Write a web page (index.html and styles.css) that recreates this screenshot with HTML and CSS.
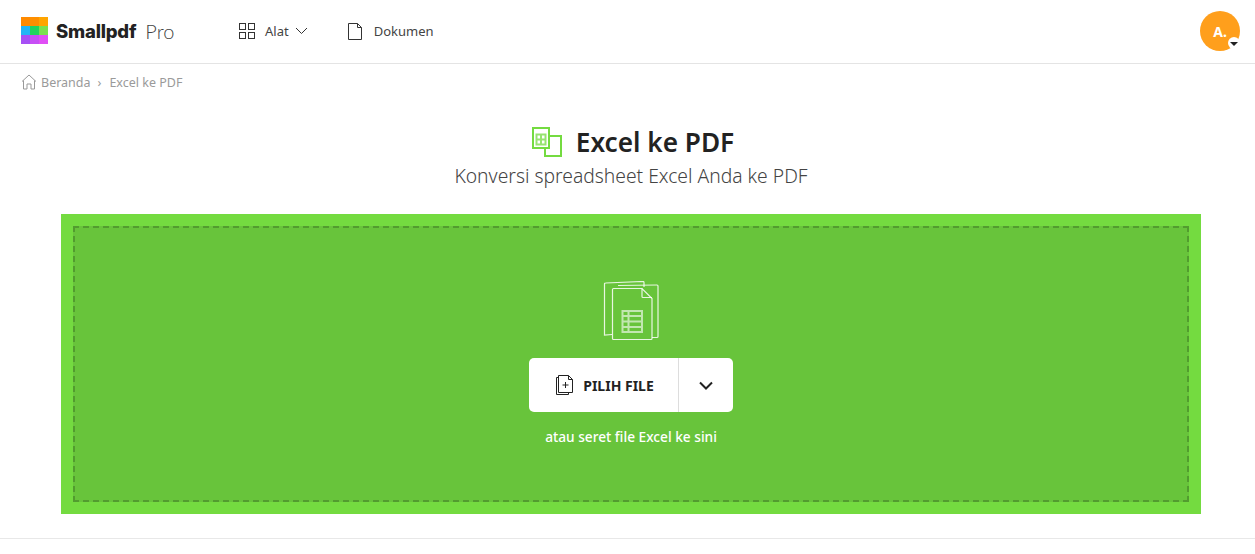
FILE: index.html
```html
<!DOCTYPE html>
<html lang="id">
<head>
    <meta charset="UTF-8">
    <meta name="viewport" content="width=device-width, initial-scale=1.0">
    <title>Excel ke PDF</title>
    <link rel="stylesheet" href="styles.css">
</head>
<body>
    <header class="topbar">
        <div class="brand">
            <svg class="brand-mark" width="27" height="27" viewBox="0 0 27 27">
                <rect x="0" y="0" width="9" height="9" fill="#ff8a00"/>
                <rect x="9" y="0" width="9" height="9" fill="#ff8f00"/>
                <rect x="18" y="0" width="9" height="9" fill="#ffa500"/>
                <rect x="0" y="9" width="9" height="9" fill="#22b4f5"/>
                <rect x="9" y="9" width="9" height="9" fill="#22d35f"/>
                <rect x="18" y="9" width="9" height="9" fill="#7be04f"/>
                <rect x="0" y="18" width="9" height="9" fill="#a64ff5"/>
                <rect x="9" y="18" width="9" height="9" fill="#c74ff5"/>
                <rect x="18" y="18" width="9" height="9" fill="#e04ff5"/>
            </svg>
            <span class="brand-name">Smallpdf</span>
            <span class="brand-tier">Pro</span>
        </div>
        <nav class="nav">
            <a class="nav-item nav-tools">
                <svg width="18" height="18" viewBox="0 0 18 18" fill="none" stroke="#333" stroke-width="1">
                    <rect x="1.5" y="1.5" width="6" height="6"/>
                    <rect x="10.5" y="1.5" width="6" height="6"/>
                    <rect x="1.5" y="10.5" width="6" height="6"/>
                    <rect x="10.5" y="10.5" width="6" height="6"/>
                </svg>
                <span>Alat</span>
                <svg class="nav-caret" width="13" height="8" viewBox="0 0 13 8" fill="none" stroke="#333" stroke-width="1">
                    <path d="M1 1l5.500 5.500L12 1"/>
                </svg>
            </a>
            <a class="nav-item nav-docs">
                <svg width="16" height="19" viewBox="0 0 16 19" fill="none" stroke="#333" stroke-width="1">
                    <path d="M1.500 1.500v16h13V5.500l-4-4z"/>
                    <path d="M10.500 1.500v4h4"/>
                </svg>
                <span>Dokumen</span>
            </a>
        </nav>
        <div class="avatar">
            A.
            <span class="avatar-caret"></span>
        </div>
    </header>

    <div class="breadcrumb">
        <svg width="16" height="16" viewBox="0 0 16 16" fill="none" stroke="#999" stroke-width="1">
            <path d="M1 7.500L8 1l7 6.500M2.500 6.500v8.500h3.500v-5h4v5h3.500V6.500"/>
        </svg>
        <span>Beranda</span>
        <span class="crumb-sep">›</span>
        <span>Excel ke PDF</span>
    </div>

    <main class="content">
        <div class="title-row">
            <svg width="31" height="31" viewBox="0 0 31 31" fill="none" stroke="#74db40" stroke-width="2">
                <rect x="13" y="9" width="16" height="20" fill="#fff"/>
                <rect x="1" y="1" width="16" height="20" fill="#fff"/>
                <path d="M4.500 7.500h9v10h-9zM4.500 12.500h9M9 7.500v10" stroke-opacity="0.75"/>
            </svg>
            <h1>Excel ke PDF</h1>
        </div>
        <p class="subtitle">Konversi spreadsheet Excel Anda ke PDF</p>

        <section class="dropzone">
            <div class="dropzone-inner">
                <svg class="files-icon" width="56" height="60" viewBox="0 0 56 60" fill="none" stroke="#fff" stroke-opacity="0.85" stroke-width="1.2">
                    <path d="M9 53.500L1.500 54V3q0-1 1-1l37.500-1.500q1 0 1 1V6"/>
                    <path d="M15 4.500l39-0.500q1 0 1 1v50.500q0 1-1 1h-5"/>
                    <path d="M9.500 8.500q0-1 1-1h28.500l10 10v40q0 1-1 1H10.500q-1 0-1-1z" fill="#68c43b"/>
                    <path d="M39 7.500v8q0 1 1 1h9"/>
                    <path d="M19.500 30h19.500v21H19.500zM19.500 35h19.500M19.500 40.500h19.500M19.500 46h19.500M25.500 30v21" stroke-opacity="0.6" stroke-width="2"/>
                </svg>
                <div class="picker">
                    <button class="picker-main">
                        <svg width="19" height="22" viewBox="0 0 19 22" fill="none" stroke="#222" stroke-width="1">
                            <path d="M3.500 3.500H1.500v17h12v-2"/>
                            <path d="M3.500 1.500v17h14V5.500l-4-4z" fill="#fff"/>
                            <path d="M13.500 1.500v4h4M10.500 8v6M7.500 11h6"/>
                        </svg>
                        PILIH FILE
                    </button>
                    <button class="picker-more">
                        <svg width="14" height="9" viewBox="0 0 14 9" fill="none" stroke="#222" stroke-width="2">
                            <path d="M1 1.500l6 6 6-6"/>
                        </svg>
                    </button>
                </div>
                <p class="drop-hint">atau seret file Excel ke sini</p>
            </div>
        </section>
    </main>

    <footer class="page-end"></footer>
</body>
</html>
```

FILE: styles.css
```css
body {
    margin: 0;
    font-family: 'Noto Sans', sans-serif;
    background: #fff;
    color: #222;
}
.topbar {
    height: 63px;
    display: flex;
    align-items: center;
    padding: 0 15px 0 21px;
    border-bottom: 1px solid #e4e4e4;
}
.brand {
    display: flex;
    align-items: center;
    width: 217px;
    margin-bottom: 2px;
}
.brand-name {
    font-family: 'Inter', sans-serif;
    font-weight: 800;
    font-size: 18.5px;
    letter-spacing: -0.2px;
    margin-left: 8px;
    color: #222;
}
.brand-tier {
    font-family: 'Lato', sans-serif;
    font-weight: 300;
    font-size: 20px;
    margin-left: 9px;
    color: #444;
}
.nav {
    display: flex;
    align-items: center;
    font-size: 13px;
    color: #444;
    margin-bottom: 1px;
}
.nav-item {
    display: flex;
    align-items: center;
}
.nav-item span {
    margin-left: 9px;
}
.nav-caret {
    margin-left: 6px;
}
.nav-tools {
    margin-right: 39px;
}
.nav-docs span {
    margin-left: 11px;
}
.avatar {
    margin-left: auto;
    margin-bottom: 1px;
    width: 40px;
    height: 40px;
    border-radius: 50%;
    background: #ff9f1c;
    color: #fff;
    font-weight: 700;
    font-size: 14px;
    display: flex;
    align-items: center;
    justify-content: center;
    position: relative;
}
.avatar-caret {
    position: absolute;
    right: 0;
    bottom: 2px;
    width: 12px;
    height: 12px;
    border-radius: 50%;
    background: #fff;
}
.avatar-caret::after {
    content: '';
    position: absolute;
    left: 2px;
    top: 5px;
    border-left: 4px solid transparent;
    border-right: 4px solid transparent;
    border-top: 4px solid #222;
}
.breadcrumb {
    display: flex;
    align-items: center;
    height: 36px;
    padding-left: 21px;
    font-size: 12.5px;
    color: #9a9a9a;
}
.breadcrumb span {
    margin-left: 4px;
}
.breadcrumb .crumb-sep {
    margin: 0 4px 0 7px;
}
.content {
    margin: 0 54px 0 61px;
}
.title-row {
    display: flex;
    align-items: center;
    justify-content: center;
    margin-top: 25px;
    padding-left: 4px;
    height: 34px;
}
.title-row h1 {
    margin: 0 0 0 13px;
    font-size: 26.2px;
    font-weight: 600;
    color: #222;
}
.subtitle {
    margin: 3px 0 0;
    text-align: center;
    font-size: 19.3px;
    font-weight: 300;
    line-height: 28px;
    color: #444;
}
.dropzone {
    margin-top: 24px;
    height: 276px;
    padding: 12px;
    background: #74db40;
}
.dropzone-inner {
    height: 100%;
    box-sizing: border-box;
    border: 2px dashed rgba(0, 0, 0, 0.2);
    background: #68c43b;
    display: flex;
    flex-direction: column;
    align-items: center;
    padding-top: 53px;
}
.files-icon {
    display: block;
}
.picker {
    display: flex;
    margin-top: 17px;
    height: 54px;
    background: #fff;
    border-radius: 5px;
}
.picker button {
    border: none;
    background: none;
    display: flex;
    align-items: center;
    justify-content: center;
    padding: 0;
    font-family: inherit;
}
.picker button.picker-main {
    width: 150px;
    padding-left: 2px;
    gap: 9px;
    font-size: 14px;
    font-weight: 700;
    color: #222;
    border-right: 1px solid #ddd;
}
.picker-more {
    width: 54px;
}
.drop-hint {
    margin: 15px 0 0;
    color: #fff;
    font-size: 13.7px;
    font-weight: 500;
}
.page-end {
    margin-top: 24px;
    border-top: 1px solid #e8e8e8;
}
```
